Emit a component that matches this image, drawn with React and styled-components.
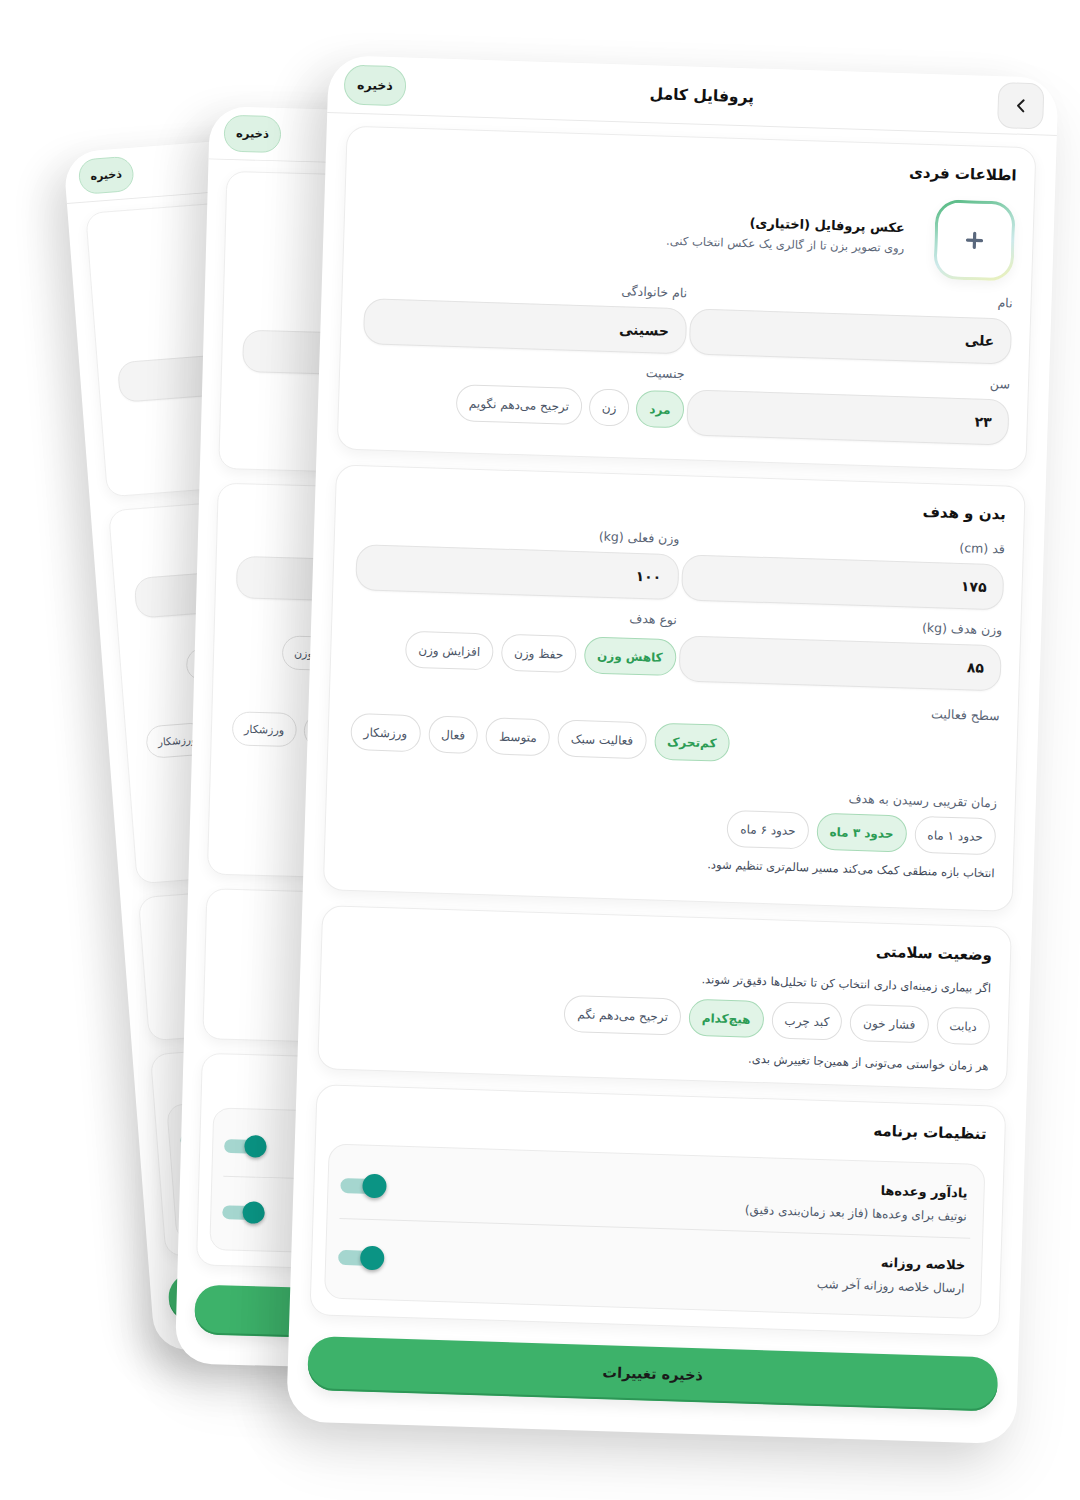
import React from "react";
import styled, { createGlobalStyle } from "styled-components";
import { ChevronLeft, Plus } from "lucide-react";

const GlobalStyle = createGlobalStyle`
  html, body {
    margin: 0;
    padding: 0;
    background: #ffffff;
  }
  body {
    font-family: "DejaVu Sans", "Noto Sans", sans-serif;
    color: #151515;
  }
  * {
    box-sizing: border-box;
  }
`;

const Stage = styled.div`
  position: relative;
  width: 1080px;
  height: 1500px;
  overflow: hidden;
  background: #ffffff;
`;

// each phone screen is a layer on the canvas, stacked with its own tilt
const Layer = styled.div`
  position: absolute;
  left: ${props => props.$x}px;
  top: ${props => props.$y}px;
  transform-origin: 0 0;
  transform: rotate(${props => props.$rot}deg) scale(${props => props.$scale});
`;

const Phone = styled.div`
  width: 730px;
  direction: rtl;
  background: #ffffff;
  border-radius: 40px;
  padding-bottom: 32px;
  box-shadow: -22px 14px 44px rgba(0, 0, 0, 0.11), 0 30px 60px rgba(0, 0, 0, 0.08);
`;

const Header = styled.header`
  height: 58px;
  display: flex;
  align-items: center;
  justify-content: space-between;
  padding: 0 14px 0 16px;
  border-bottom: 1px solid #e9e9e9;
`;

const BackButton = styled.div`
  width: 46px;
  height: 46px;
  border-radius: 15px;
  background: #f3f3f3;
  border: 1px solid #e3e3e3;
  display: flex;
  align-items: center;
  justify-content: center;
  color: #1c1c1c;
`;

const HeaderTitle = styled.h1`
  margin: 0;
  font-size: 15.5px;
  font-weight: 700;
  color: #111;
`;

const SavePill = styled.div`
  width: 62px;
  height: 40px;
  border-radius: 20px;
  background: #ddf2e4;
  border: 1px solid #b4dfc2;
  display: flex;
  align-items: center;
  justify-content: center;
  font-size: 12.5px;
  font-weight: 700;
  color: #151515;
`;

const Content = styled.div`
  padding: 12px 20px 0;
  display: flex;
  flex-direction: column;
  gap: 15px;
`;

const Section = styled.section`
  background: #ffffff;
  border: 1px solid #ececec;
  border-radius: 20px;
  box-shadow: 0 5px 14px rgba(0, 0, 0, 0.05);
  padding: 16px 18px ${props => props.$bottom || 28}px ${props => props.$left || 22}px;
`;

const SectionTitle = styled.h2`
  margin: 0;
  font-size: 15px;
  line-height: 24px;
  font-weight: 700;
  color: #111;
`;

const AvatarRow = styled.div`
  margin-top: 14px;
  display: flex;
  align-items: center;
  gap: 30px;
`;

const Avatar = styled.div`
  width: 80px;
  height: 80px;
  border-radius: 24px;
  border: 3px solid transparent;
  background: linear-gradient(#ffffff, #ffffff) padding-box,
    linear-gradient(160deg, #4cb67a 0%, #a6dbc9 38%, #cde9ea 62%, #eef2b5 100%) border-box;
  display: flex;
  align-items: center;
  justify-content: center;
  color: #5a687d;
  box-shadow: 0 4px 12px rgba(0, 0, 0, 0.05);
  flex-shrink: 0;
`;

const AvatarText = styled.div`
  display: flex;
  flex-direction: column;
  gap: 5px;
`;

const AvatarTitle = styled.div`
  font-size: 13px;
  font-weight: 700;
  color: #111;
`;

const Hint = styled.div`
  margin-top: ${props => props.$top || 0}px;
  font-size: 11.5px;
  line-height: 16px;
  color: ${props => props.$soft ? "#5b6677" : "#3e4858"};
`;

const Grid = styled.div`
  margin-top: ${props => props.$top}px;
  display: grid;
  grid-template-columns: 1fr 1fr;
  column-gap: 3px;
  row-gap: 11px;
`;

const Field = styled.div`
  display: flex;
  flex-direction: column;
  margin-top: ${props => props.$top || 0}px;
`;

const Label = styled.label`
  font-size: 12.5px;
  line-height: 18px;
  color: #586374;
  margin-bottom: ${props => props.$gap ?? 6}px;
`;

const Input = styled.div`
  height: 46px;
  border-radius: 20px;
  background: #f4f4f4;
  border: 1px solid #e3e3e3;
  box-shadow: 0 1px 2px rgba(0, 0, 0, 0.04);
  display: flex;
  align-items: center;
  padding: 0 16px;
  font-size: 14px;
  font-weight: 700;
  color: #151515;
`;

const Chips = styled.div`
  display: flex;
  flex-wrap: wrap;
  gap: ${props => props.$gap || 8}px;
  justify-content: ${props => props.$end ? "flex-end" : "flex-start"};
  margin-top: ${props => props.$top || 0}px;
`;

const Chip = styled.span`
  display: inline-flex;
  align-items: center;
  justify-content: center;
  height: 37px;
  padding: 0 12px;
  border-radius: 999px;
  border: 1px solid ${props => props.$active ? "#a7dab7" : "#dedede"};
  background: ${props => props.$active ? "#e1f4e7" : "#ffffff"};
  color: ${props => props.$active ? "#2c9c55" : "#4a5466"};
  font-weight: ${props => props.$active ? 700 : 400};
  font-size: 12px;
  white-space: nowrap;
`;

const SettingsBox = styled.div`
  margin-top: 18px;
  background: #fafafa;
  border: 1px solid #ebebeb;
  border-radius: 18px;
  padding-bottom: 8px;
`;

const SettingRow = styled.div`
  display: flex;
  align-items: center;
  justify-content: space-between;
  padding: ${props => props.$first ? "19px 16px 12px 12px" : "17px 16px 12px 12px"};
`;

const SettingText = styled.div`
  display: flex;
  flex-direction: column;
  gap: 4px;
`;

const SettingTitle = styled.div`
  font-size: 13px;
  line-height: 20px;
  font-weight: 700;
  color: #141414;
`;

const SettingSub = styled.div`
  font-size: 12px;
  line-height: 18px;
  color: #4c5769;
`;

const Divider = styled.div`
  height: 1px;
  margin: 0 12px;
  background: #e6e6e6;
`;

const Toggle = styled.div`
  position: relative;
  width: 46px;
  height: 24px;
  flex-shrink: 0;
`;

const Track = styled.div`
  position: absolute;
  left: 0;
  top: 5px;
  width: 40px;
  height: 15px;
  border-radius: 8px;
  background: #a5d6cf;
`;

const Knob = styled.div`
  position: absolute;
  right: 0;
  top: 0;
  width: 24px;
  height: 24px;
  border-radius: 50%;
  background: #0b9484;
  box-shadow: 0 2px 4px rgba(0, 0, 0, 0.3);
`;

const SaveButton = styled.div`
  margin: 21px 20px 0;
  height: 54px;
  border-radius: 26px;
  background: #3db26a;
  box-shadow: inset 0 -2px 0 #2d9656, 0 6px 14px rgba(0, 0, 0, 0.08);
  display: flex;
  align-items: center;
  justify-content: center;
  font-size: 14.5px;
  font-weight: 700;
  color: #1a1a1a;
`;

const genders = ["مرد", "زن", "ترجیح می‌دهم نگویم"];
const goals = ["کاهش وزن", "حفظ وزن", "افزایش وزن"];
const activity = ["کم‌تحرک", "فعالیت سبک", "متوسط", "فعال", "ورزشکار"];
const durations = ["حدود ۱ ماه", "حدود ۳ ماه", "حدود ۶ ماه"];
const health = ["دیابت", "فشار خون", "کبد چرب", "هیچ‌کدام", "ترجیح می‌دهم نگم"];

const ChipList = ({ items, active, ...rest }) => (
  <Chips {...rest}>
    {items.map(item => (
      <Chip key={item} $active={item === active}>{item}</Chip>
    ))}
  </Chips>
);

const Switch = () => (
  <Toggle>
    <Track />
    <Knob />
  </Toggle>
);

const ProfileScreen = () => (
  <Phone>
    <Header>
      <BackButton>
        <ChevronLeft size={22} strokeWidth={2.2} />
      </BackButton>
      <HeaderTitle>پروفایل کامل</HeaderTitle>
      <SavePill>ذخیره</SavePill>
    </Header>

    <Content>
      <Section $bottom={24}>
        <SectionTitle>اطلاعات فردی</SectionTitle>
        <AvatarRow>
          <Avatar>
            <Plus size={24} strokeWidth={3.2} />
          </Avatar>
          <AvatarText>
            <AvatarTitle>عکس پروفایل (اختیاری)</AvatarTitle>
            <Hint $soft>روی تصویر بزن تا از گالری یک عکس انتخاب کنی.</Hint>
          </AvatarText>
        </AvatarRow>
        <Grid $top={13}>
          <Field>
            <Label>نام</Label>
            <Input>علی</Input>
          </Field>
          <Field>
            <Label>نام خانوادگی</Label>
            <Input>حسینی</Input>
          </Field>
          <Field>
            <Label>سن</Label>
            <Input>۲۳</Input>
          </Field>
          <Field>
            <Label $gap={8}>جنسیت</Label>
            <ChipList items={genders} active="مرد" $gap={7} />
          </Field>
        </Grid>
      </Section>

      <Section $bottom={29}>
        <SectionTitle>بدن و هدف</SectionTitle>
        <Grid $top={14}>
          <Field>
            <Label>قد (cm)</Label>
            <Input>۱۷۵</Input>
          </Field>
          <Field>
            <Label>وزن فعلی (kg)</Label>
            <Input>۱۰۰</Input>
          </Field>
          <Field>
            <Label>وزن هدف (kg)</Label>
            <Input>۸۵</Input>
          </Field>
          <Field>
            <Label $gap={10}>نوع هدف</Label>
            <ChipList items={goals} active="کاهش وزن" />
          </Field>
        </Grid>
        <Field $top={16}>
          <Label $gap={8}>سطح فعالیت</Label>
          <ChipList items={activity} active="کم‌تحرک" $end />
        </Field>
        <Field $top={24}>
          <Label $gap={6}>زمان تقریبی رسیدن به هدف</Label>
          <ChipList items={durations} active="حدود ۳ ماه" />
        </Field>
        <Hint $top={10}>انتخاب بازه منطقی کمک می‌کند مسیر سالم‌تری تنظیم شود.</Hint>
      </Section>

      <Section $bottom={15}>
        <SectionTitle>وضعیت سلامتی</SectionTitle>
        <Hint $top={13}>اگر بیماری زمینه‌ای داری انتخاب کن تا تحلیل‌ها دقیق‌تر شوند.</Hint>
        <ChipList items={health} active="هیچ‌کدام" $top={12} />
        <Hint $top={13}>هر زمان خواستی می‌تونی از همین‌جا تغییرش بدی.</Hint>
      </Section>

      <Section $bottom={16} $left={13}>
        <SectionTitle>تنظیمات برنامه</SectionTitle>
        <SettingsBox>
          <SettingRow $first>
            <SettingText>
              <SettingTitle>یادآور وعده‌ها</SettingTitle>
              <SettingSub>نوتیف برای وعده‌ها (فاز بعد زمان‌بندی دقیق)</SettingSub>
            </SettingText>
            <Switch />
          </SettingRow>
          <Divider />
          <SettingRow>
            <SettingText>
              <SettingTitle>خلاصه روزانه</SettingTitle>
              <SettingSub>ارسال خلاصه روزانه آخر شب</SettingSub>
            </SettingText>
            <Switch />
          </SettingRow>
        </SettingsBox>
      </Section>
    </Content>

    <SaveButton>ذخیره تغییرات</SaveButton>
  </Phone>
);

export default function App() {
  return (
    <>
      <GlobalStyle />
      <Stage>
        <Layer $x={63} $y={153} $rot={-4.4} $scale={0.88}>
          <ProfileScreen />
        </Layer>
        <Layer $x={210} $y={106} $rot={1.6} $scale={0.92}>
          <ProfileScreen />
        </Layer>
        <Layer $x={329} $y={55} $rot={1.8} $scale={1}>
          <ProfileScreen />
        </Layer>
      </Stage>
    </>
  );
}
